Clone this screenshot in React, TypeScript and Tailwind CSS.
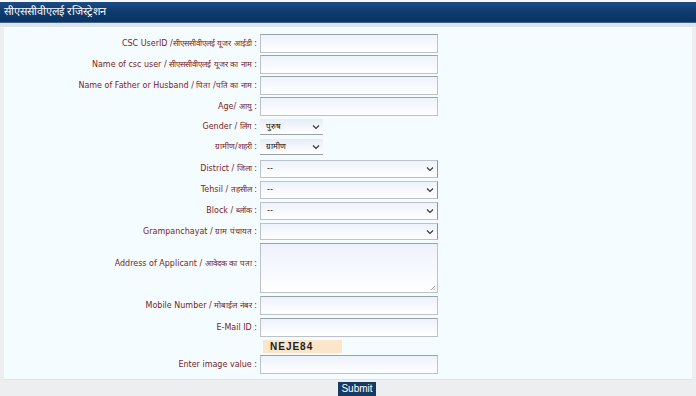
import React from "react";

const labelCls =
  "w-[256px] shrink-0 text-right pr-[3px] text-[8px] leading-none text-[#7a2424] whitespace-nowrap";
const inputCls =
  "w-[178px] h-[19px] border border-[#bcc2c7] border-t-[#9aa2a8] bg-gradient-to-b from-[#eef2fb] to-white";

function Row({ label, mt = 2, children }: { label: string; mt?: number; children: React.ReactNode }) {
  return (
    <div className="flex items-center" style={{ marginTop: mt }}>
      <div className={labelCls}>{label}</div>
      {children}
    </div>
  );
}

function Chevron() {
  return (
    <svg width="8" height="6" viewBox="0 0 8 6" className="absolute right-[3px] top-1/2 -translate-y-1/2">
      <path d="M1 1.5 L4 4.5 L7 1.5" fill="none" stroke="#333" strokeWidth="1.1" />
    </svg>
  );
}

function Select({ value, w = 178, h = 19, small = false }: { value: string; w?: number; h?: number; small?: boolean }) {
  return (
    <div
      className={
        "relative flex items-center pl-[6px] text-[8px] text-[#111] " +
        (small
          ? "bg-gradient-to-b from-[#e6ecf8] to-white border-b border-[#9aa2a8]"
          : "border border-[#bcc2c7] border-r-[#8a9298] bg-gradient-to-b from-[#eef2fb] to-white")
      }
      style={{ width: w, height: h }}
    >
      <span>{value}</span>
      <Chevron />
    </div>
  );
}

export default function App() {
  return (
    <div
      className="w-[696px] h-[396px] bg-[#eceeef] overflow-hidden"
      style={{ fontFamily: '"DejaVu Sans", Verdana, sans-serif' }}
    >
      <div className="h-[2px] bg-[#f4f6f8]" />
      <div className="h-[21px] bg-gradient-to-b from-[#1c4d86] via-[#0e3a6e] to-[#0a3463] border-b border-[#3d6590] flex items-center pl-[4px] text-white text-[11px]">
        सीएससीवीएलई रजिस्ट्रेशन
      </div>
      <div className="h-[4px] bg-[#dde3e6]" />
      <div className="mx-[4px] h-[353px] bg-[#f5fcff] border-b border-[#dfe3e5] pt-[7px]">
        <Row label="CSC UserID /सीएससीवीएलई यूजर आईडी :" mt={0}>
          <div className={inputCls} />
        </Row>
        <Row label="Name of csc user / सीएससीवीएलई यूजर का नाम :">
          <div className={inputCls} />
        </Row>
        <Row label="Name of Father or Husband / पिता /पति का नाम :">
          <div className={inputCls} />
        </Row>
        <Row label="Age/ आयु :">
          <div className={inputCls} />
        </Row>
        <Row label="Gender / लिंग :" mt={3}>
          <Select value="पुरुष" w={63} h={16} small />
        </Row>
        <Row label="ग्रामीण/शहरी :" mt={4}>
          <Select value="ग्रामीण" w={63} h={16} small />
        </Row>
        <Row label="District / जिला :" mt={5}>
          <Select value="--" h={18} />
        </Row>
        <Row label="Tehsil / तहसील :" mt={3}>
          <Select value="--" h={18} />
        </Row>
        <Row label="Block / ब्लॉक :" mt={3}>
          <Select value="--" h={18} />
        </Row>
        <Row label="Grampanchayat / ग्राम पंचायत :" mt={3}>
          <Select value="" h={17} />
        </Row>
        <div className="flex items-start mt-[3px]">
          <div className={labelCls + " pt-[17px]"}>Address of Applicant / आवेदक का पता :</div>
          <div className="relative w-[178px] h-[50px] border border-[#bcc2c7] border-t-[#9aa2a8] bg-gradient-to-b from-[#eef2fb] to-white">
            <svg width="6" height="6" viewBox="0 0 6 6" className="absolute right-[1px] bottom-[1px]">
              <path d="M5 1 L1 5 M5 3.5 L3.5 5" stroke="#888" strokeWidth="0.8" />
            </svg>
          </div>
        </div>
        <Row label="Mobile Number / मोबाईल नंबर :" mt={3}>
          <div className={inputCls} />
        </Row>
        <Row label="E-Mail ID :" mt={3}>
          <div className={inputCls} />
        </Row>
        <div className="flex mt-[3px]">
          <div className="w-[259px] shrink-0" />
          <div
            className="w-[79px] h-[13px] bg-[#fbe6c9] flex items-center pl-[7px] text-[10px] font-bold tracking-[1px] text-[#222]"
            style={{ fontFamily: '"Liberation Sans", Arial, sans-serif' }}
          >
            NEJE84
          </div>
        </div>
        <Row label="Enter image value :" mt={2}>
          <div className={inputCls} />
        </Row>
      </div>
      <div className="flex justify-center pt-[2px] pl-[18px]">
        <button
          className="h-[14px] px-[3px] bg-[#173a63] text-white text-[10px] leading-none"
          style={{ fontFamily: '"Liberation Sans", Arial, sans-serif' }}
        >
          Submit
        </button>
      </div>
    </div>
  );
}
